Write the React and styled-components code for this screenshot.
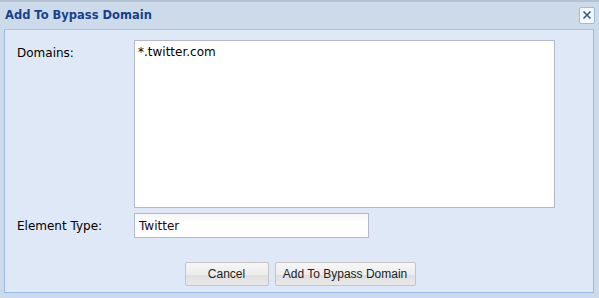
import React from 'react';
import styled, { createGlobalStyle } from 'styled-components';

const Global = createGlobalStyle`
  html, body { margin: 0; padding: 0; background: #cbd9ea; }
  body { width: 599px; height: 298px; overflow: hidden; }
`;

const Window = styled.div`
  width: 599px;
  height: 298px;
  box-sizing: border-box;
  background: #cddaea;
  border-top: 2px solid #b4c2d3;
  padding: 0 5px 5px 4px;
  display: flex;
  flex-direction: column;
`;

const Header = styled.div`
  height: 27px;
  display: flex;
  align-items: center;
  justify-content: space-between;
  padding: 0 0 0 1px;
`;

const Title = styled.div`
  font-family: "DejaVu Sans", Verdana, sans-serif;
  font-weight: bold;
  font-size: 11.5px;
  color: #15428b;
  margin-top: -1px;
`;

const Close = styled.div`
  width: 14px;
  height: 15px;
  margin-right: -1px;
  margin-top: -1px;
  border: 1px solid #99bbe8;
  border-radius: 2px;
  background: #f4f7fc;
  display: flex;
  align-items: center;
  justify-content: center;
`;

const Body = styled.div`
  flex: 1;
  background: #dfe8f6;
  border: 1px solid #99bbe8;
  border-top-color: #a9c3e6;
  padding: 10px 0 0 12px;
  display: flex;
  flex-direction: column;
`;

const Row = styled.div`
  display: flex;
  align-items: ${p => (p.top ? 'flex-start' : 'center')};
  margin-bottom: 5px;
`;

const Label = styled.div`
  width: 117px;
  font-family: "DejaVu Sans", Verdana, sans-serif;
  font-size: 12px;
  color: #000;
  padding-top: ${p => (p.top ? '6px' : '0')};
`;

const Area = styled.div`
  width: 421px;
  height: 168px;
  background: #fff;
  border: 1px solid #b5b8c8;
  padding: 4px 3px;
  box-sizing: border-box;
  font-family: "DejaVu Sans", Verdana, sans-serif;
  font-size: 12px;
  color: #000;
`;

const Field = styled.div`
  width: 235px;
  height: 25px;
  box-sizing: border-box;
  background: linear-gradient(#f6f6f6, #fff 40%);
  border: 1px solid #b5b8c8;
  padding: 0 4px;
  display: flex;
  align-items: center;
  font-family: "DejaVu Sans", Verdana, sans-serif;
  font-size: 12px;
  color: #1a0a1a;
`;

const Buttons = styled.div`
  display: flex;
  justify-content: center;
  gap: 6px;
  margin-top: 19px;
  padding-right: 10px;
`;

const Button = styled.div`
  width: ${p => p.w}px;
  height: 24px;
  box-sizing: border-box;
  border: 1px solid #c4c4c4;
  border-radius: 2px;
  background: linear-gradient(#f6f6f6 0%, #ececec 55%, #e0e0e0 56%, #e8e8e8 100%);
  display: flex;
  align-items: center;
  justify-content: center;
  font-family: "Liberation Sans", Arial, sans-serif;
  font-size: 12px;
  color: #222;
`;

export default function App() {
  return (
    <>
      <Global />
      <Window>
        <Header>
          <Title>Add To Bypass Domain</Title>
          <Close>
            <svg width="10" height="10" viewBox="0 0 10 10">
              <path d="M1.5 1.5 L8.5 8.5 M8.5 1.5 L1.5 8.5" stroke="#3d5680" strokeWidth="1.6" />
            </svg>
          </Close>
        </Header>
        <Body>
          <Row top>
            <Label top>Domains:</Label>
            <Area>*.twitter.com</Area>
          </Row>
          <Row>
            <Label>Element Type:</Label>
            <Field>Twitter</Field>
          </Row>
          <Buttons>
            <Button w={84}>Cancel</Button>
            <Button w={141}>Add To Bypass Domain</Button>
          </Buttons>
        </Body>
      </Window>
    </>
  );
}
